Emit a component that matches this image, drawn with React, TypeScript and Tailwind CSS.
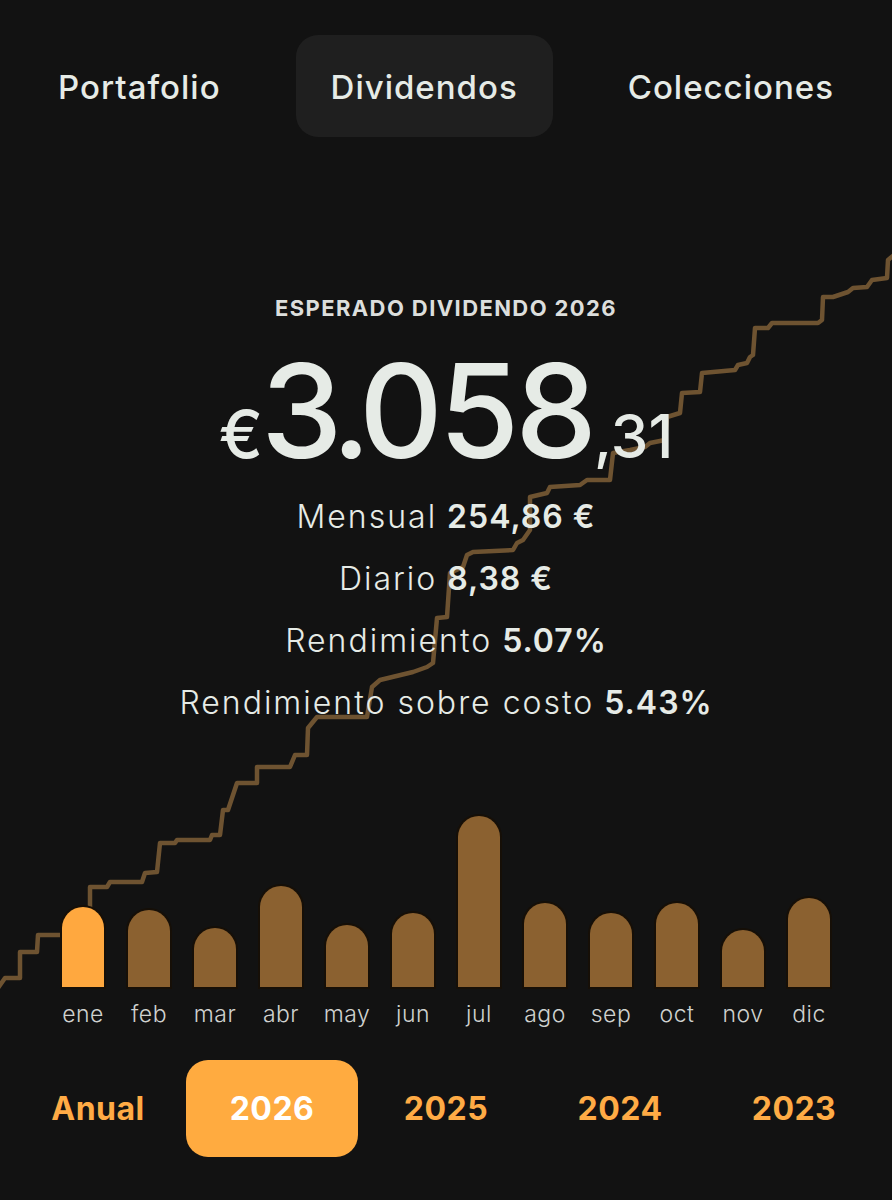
import React from "react";

const months = [
  { m: "ene", h: 80, active: true },
  { m: "feb", h: 77 },
  { m: "mar", h: 59 },
  { m: "abr", h: 101 },
  { m: "may", h: 62 },
  { m: "jun", h: 74 },
  { m: "jul", h: 171 },
  { m: "ago", h: 84 },
  { m: "sep", h: 74 },
  { m: "oct", h: 84 },
  { m: "nov", h: 57 },
  { m: "dic", h: 89 },
];

const linePath =
  "M-2,988 L5,978 L20,978 L20,952 L37,952 L38,935 L90,935 L90,887 L107,887 L110,882 L142,882 L145,873 L157,872 L160,843 L175,843 L177,840 L210,840 L212,835 L220,835 L223,810 L228,810 L237,783 L257,783 L257,767 L290,767 L295,755 L307,755 L308,728 L317,717 L367,717 L372,687 L380,680 L413,672 L427,667 L433,663 L437,618 L447,617 L450,573 L463,567 L467,555 L473,552 L513,550 L517,543 L523,540 L530,530 L530,497 L547,493 L550,487 L580,485 L587,480 L610,480 L613,453 L630,450 L645,447 L650,443 L665,440 L667,417 L680,413 L682,393 L700,392 L702,373 L713,372 L735,370 L738,365 L747,363 L750,357 L753,355 L755,328 L768,328 L772,323 L818,323 L822,320 L823,297 L833,297 L848,292 L853,288 L867,287 L872,280 L887,278 L888,260 L894,255";

const font = { fontFamily: "Inter, 'Noto Sans', sans-serif" };

export default function App() {
  return (
    <div
      className="relative w-[892px] h-[1200px] overflow-hidden bg-[#121212] text-[#e6ebe6]"
      style={font}
    >
      <svg
        className="absolute inset-0"
        width="892"
        height="1200"
        viewBox="0 0 892 1200"
        fill="none"
      >
        <path
          d={linePath}
          stroke="#6e5331"
          strokeWidth="4.5"
          strokeLinejoin="round"
          strokeLinecap="round"
        />
      </svg>

      <div className="relative flex flex-col">
        {/* Top tabs */}
        <div className="flex justify-center gap-10 pt-[35px] text-[33px] font-medium tracking-[1px]">
          <div className="h-[102px] px-[35px] pt-[3px] flex items-center">
            Portafolio
          </div>
          <div className="h-[102px] px-[35px] pt-[3px] flex items-center bg-[#1f1f1f] rounded-[22px]">
            Dividendos
          </div>
          <div className="h-[102px] px-[35px] pt-[3px] flex items-center">
            Colecciones
          </div>
        </div>

        {/* Heading */}
        <div className="mt-[157px] h-[28px] flex items-center justify-center text-[22px] font-bold tracking-[1.4px] text-[#dcdedc]">
          ESPERADO DIVIDENDO 2026
        </div>

        {/* Big number */}
        <div className="mt-[24px] flex items-baseline justify-center leading-none font-medium">
          <span className="text-[66px] mr-[-2px]">€</span>
          <span className="text-[130px] tracking-[-11px]">3</span>
          <span className="text-[130px] tracking-[-12px]">.</span>
          <span className="text-[130px] tracking-[-4px]">058</span>
          <span className="text-[60px] pl-[1px] tracking-[0px]">,31</span>
        </div>

        {/* Stats */}
        <div className="mt-[10px] flex flex-col text-[32px]">
          <div className="h-[62px] flex items-center justify-center gap-[10px]">
            <span className="font-light tracking-[2px]">Mensual</span>
            <span className="font-semibold tracking-[1px]">254,86 €</span>
          </div>
          <div className="h-[62px] flex items-center justify-center gap-[10px]">
            <span className="font-light tracking-[2px]">Diario</span>
            <span className="font-semibold tracking-[1px]">8,38 €</span>
          </div>
          <div className="h-[62px] flex items-center justify-center gap-[10px]">
            <span className="font-light tracking-[2px]">Rendimiento</span>
            <span className="font-semibold tracking-[1px]">5.07%</span>
          </div>
          <div className="h-[62px] flex items-center justify-center gap-[10px]">
            <span className="font-light tracking-[2px]">Rendimiento sobre costo</span>
            <span className="font-semibold tracking-[1px]">5.43%</span>
          </div>
        </div>

        {/* Bar chart */}
        <div className="mt-[73px] px-[50px] grid grid-cols-12">
          {months.map((d) => (
            <div key={d.m} className="flex flex-col items-center">
              <div className="h-[180px] flex items-end">
                <div
                  className={
                    d.active
                      ? "w-[42px] rounded-t-full bg-[#ffa83f] shadow-[0_0_0_2px_#160f07]"
                      : "w-[42px] rounded-t-full bg-[#8b6130] shadow-[0_0_0_2px_#160f07]"
                  }
                  style={{ height: d.h }}
                />
              </div>
              <div className="mt-[13px] h-[28px] flex items-center text-[23px] font-light tracking-[0.5px] text-[#cfd1cf]">
                {d.m}
              </div>
            </div>
          ))}
        </div>

        {/* Year tabs */}
        <div className="mt-[32px] px-[11px] grid grid-cols-5 text-[32px] font-bold tracking-[0.5px] text-[#ffab45]">
          <div className="h-[97px] flex items-center justify-center">Anual</div>
          <div className="h-[97px] mx-[1px] flex items-center justify-center rounded-[22px] bg-[#ffab40] text-white">
            2026
          </div>
          <div className="h-[97px] flex items-center justify-center">2025</div>
          <div className="h-[97px] flex items-center justify-center">2024</div>
          <div className="h-[97px] flex items-center justify-center">2023</div>
        </div>
      </div>
    </div>
  );
}
